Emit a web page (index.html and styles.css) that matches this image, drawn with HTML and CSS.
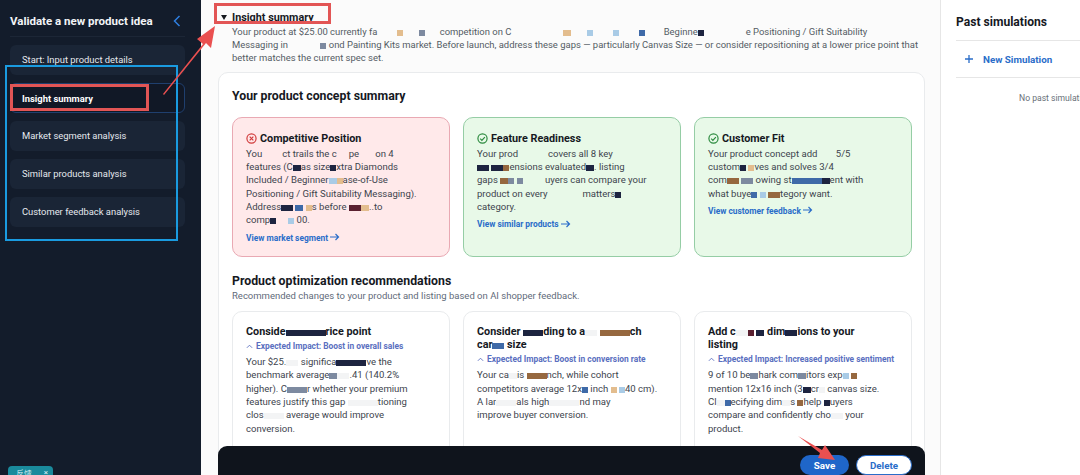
FILE: index.html
```html
<!DOCTYPE html>
<html lang="en">
<head>
    <meta charset="UTF-8">
    <meta name="viewport" content="width=device-width, initial-scale=1.0">
    <title>Validate a new product idea</title>
    <link rel="stylesheet" href="styles.css">
</head>
<body>
    <div class="shell">
        <div class="sidebar">
            <div class="side-head">
                <div class="side-title">Validate a new product idea</div>
                <svg class="side-chevron" width="8" height="12" viewBox="0 0 8 12"><path d="M6.5 1 1.5 6l5 5" fill="none" stroke="#2f7fe0" stroke-width="1.5"/></svg>
            </div>
            <div class="nav">
                <div class="nav-item">Start: Input product details</div>
                <div class="nav-item active">Insight summary</div>
                <div class="nav-item">Market segment analysis</div>
                <div class="nav-item">Similar products analysis</div>
                <div class="nav-item">Customer feedback analysis</div>
            </div>
            <div class="feedback"><span>反馈</span><span>×</span></div>
        </div>

        <div class="main">
            <div class="section-head"><span class="caret"></span>Insight summary</div>
            <p class="intro">Your product at $25.00 currently fa<i class="m w20 pale"></i><i class="m w6 tan"></i><i class="m w16 pale"></i><i class="m w6 slate"></i><i class="m w12 pale"></i> competition on C<i class="m w40 pale"></i><i class="m w12 pale"></i><i class="m w8 tan"></i><i class="m w16 pale"></i><i class="m w6 sky"></i><i class="m w20 pale"></i><i class="m w6 sky"></i><i class="m w20 pale"></i><i class="m w6 blue"></i><i class="m w16 pale"></i> Beginne<i class="m w6 navy"></i><i class="m w30 pale"></i><i class="m w12 pale"></i>e Positioning / Gift Suitability<br>Messaging in <i class="m w30 pale"></i><i class="m w6 slate"></i> ond Painting Kits market. Before launch, address these gaps — particularly Canvas Size — or consider repositioning at a lower price point that<br>better matches the current spec set.</p>

            <div class="panel">
                <h2 class="panel-title">Your product concept summary</h2>
                <div class="card-row">
                    <div class="summary bad">
                        <h3><svg width="11" height="11" viewBox="0 0 12 12"><circle cx="6" cy="6" r="5" fill="none" stroke="#d13a3a" stroke-width="1.3"/><path d="M4 4l4 4M8 4l-4 4" stroke="#d13a3a" stroke-width="1.3"/></svg>Competitive Position</h3>
                        <p>You<i class="m w20 pale"></i>ct trails the c<i class="m w12 pale"></i>pe<i class="m w16 pale"></i>on 4<br>features (C<i class="m w8 navy"></i>as size<i class="m w6 navy"></i>xtra Diamonds<br>Included / Beginner<i class="m w8 sky"></i><i class="m w6 tan"></i>ase-of-Use<br>Positioning / Gift Suitability Messaging).<br>Address<i class="m w12 navy"></i> <i class="m w8 blue"></i> <i class="m w6 tan"></i>s before <i class="m w12 maroon"></i><i class="m w8 tan"></i>..to<br>comp<i class="m w6 navy"></i><i class="m w12 pale"></i><i class="m w6 sky"></i> 00.</p>
                        <a class="more">View market segment <svg width="10" height="8" viewBox="0 0 10 8"><path d="M0 4h8.5M5.5 1l3 3-3 3" fill="none" stroke="#2a6dc9" stroke-width="1.2"/></svg></a>
                    </div>
                    <div class="summary good">
                        <h3><svg width="11" height="11" viewBox="0 0 12 12"><circle cx="6" cy="6" r="5" fill="none" stroke="#2b8a3e" stroke-width="1.3"/><path d="M3.5 6.2 5.3 8l3.3-3.6" fill="none" stroke="#2b8a3e" stroke-width="1.3"/></svg>Feature Readiness</h3>
                        <p>Your prod<i class="m w30 pale"></i>covers all 8 key<br><i class="m w12 navy"></i> <i class="m w12 navy"></i><i class="m w6 brown"></i>ensions evaluated<i class="m w8 navy"></i>. listing<br>gaps <i class="m w8 brown"></i><i class="m w6 slate"></i> <i class="m w6 slate"></i> <i class="m w20 pale"></i>uyers can compare your<br>product on every <i class="m w30 pale"></i> matters<i class="m w6 navy"></i><i class="m w8 pale"></i><br>category.</p>
                        <a class="more">View similar products <svg width="10" height="8" viewBox="0 0 10 8"><path d="M0 4h8.5M5.5 1l3 3-3 3" fill="none" stroke="#2a6dc9" stroke-width="1.2"/></svg></a>
                    </div>
                    <div class="summary good">
                        <h3><svg width="11" height="11" viewBox="0 0 12 12"><circle cx="6" cy="6" r="5" fill="none" stroke="#2b8a3e" stroke-width="1.3"/><path d="M3.5 6.2 5.3 8l3.3-3.6" fill="none" stroke="#2b8a3e" stroke-width="1.3"/></svg>Customer Fit</h3>
                        <p>Your product concept add<i class="m w16 pale"></i> 5/5<br>custom<i class="m w6 navy"></i> <i class="m w6 tan"></i>ves and solves 3/4<br>com<i class="m w12 brown"></i> <i class="m w12 slate"></i> owing st<i class="m w30 blue"></i><i class="m w8 navy"></i>ent with<br>what buye<i class="m w6 blue"></i> <i class="m w6 sky"></i> <i class="m w12 brown"></i>tegory want.</p>
                        <a class="more">View customer feedback <svg width="10" height="8" viewBox="0 0 10 8"><path d="M0 4h8.5M5.5 1l3 3-3 3" fill="none" stroke="#2a6dc9" stroke-width="1.2"/></svg></a>
                    </div>
                </div>

                <h2 class="panel-title second">Product optimization recommendations</h2>
                <div class="panel-sub">Recommended changes to your product and listing based on AI shopper feedback.</div>
                <div class="card-row">
                    <div class="rec">
                        <h3>Conside<i class="m w40 navy"></i>rice point</h3>
                        <div class="impact"><svg width="7" height="5" viewBox="0 0 8 5"><path d="M1 4l3-3 3 3" fill="none" stroke="#5a6fc0" stroke-width="1"/></svg>Expected Impact: Boost in overall sales</div>
                        <p>Your $25.<i class="m w12 pale"></i> significa<i class="m w30 navy"></i>ve the<br>benchmark average<i class="m w8 slate"></i><i class="m w12 pale"></i>.41 (140.2%<br>higher). C<i class="m w20 slate"></i>r whether your premium<br>features justify this gap <i class="m w30 pale"></i>tioning<br>clos<i class="m w20 pale"></i> average would improve<br>conversion.</p>
                    </div>
                    <div class="rec">
                        <h3>Consider <i class="m w20 navy"></i>ding to a<i class="m w12 pale"></i> <i class="m w30 brown"></i>ch<br>car<i class="m w12 blue"></i> size</h3>
                        <div class="impact"><svg width="7" height="5" viewBox="0 0 8 5"><path d="M1 4l3-3 3 3" fill="none" stroke="#5a6fc0" stroke-width="1"/></svg>Expected Impact: Boost in conversion rate</div>
                        <p>Your ca<i class="m w8 pale"></i>is <i class="m w20 brown"></i>nch, while cohort<br>competitors average 12x<i class="m w6 blue"></i> inch <i class="m w6 tan"></i> <i class="m w6 sky"></i>40 cm).<br>A lar<i class="m w20 pale"></i>als high<i class="m w30 pale"></i>nd may<br>improve buyer conversion.</p>
                    </div>
                    <div class="rec">
                        <h3>Add c<i class="m w12 pale"></i><i class="m w6 maroon"></i> <i class="m w8 navy"></i> dim<i class="m w12 navy"></i>ions to your<br>listing</h3>
                        <div class="impact"><svg width="7" height="5" viewBox="0 0 8 5"><path d="M1 4l3-3 3 3" fill="none" stroke="#5a6fc0" stroke-width="1"/></svg>Expected Impact: Increased positive sentiment</div>
                        <p>9 of 10 be<i class="m w8 slate"></i>hark com<i class="m w8 slate"></i>itors exp<i class="m w6 sky"></i> <i class="m w6 brown"></i><br>mention 12x16 inch (3<i class="m w8 navy"></i>cr<i class="m w6 pale"></i> canvas size.<br>Cl<i class="m w8 pale"></i><i class="m w6 blue"></i>ecifying dim<i class="m w8 pale"></i>s <i class="m w6 brown"></i>help <i class="m w6 navy"></i>uyers<br>compare and confidently cho<i class="m w12 pale"></i> your<br>product.</p>
                    </div>
                </div>
            </div>

            <div class="action-bar">
                <button class="btn-save">Save</button>
                <button class="btn-delete">Delete</button>
            </div>
        </div>

        <div class="right">
            <div class="right-title">Past simulations</div>
            <div class="new-sim"><svg width="10" height="10" viewBox="0 0 10 10"><path d="M5 1v8M1 5h8" stroke="#2a6dc9" stroke-width="1.3"/></svg>New Simulation</div>
            <div class="no-sims">No past simulations</div>
        </div>
    </div>

    <!-- Screenshot annotations drawn on top of the page -->
    <div class="mark blue-box"></div>
    <div class="mark red-box nav-box"></div>
    <div class="mark red-box head-box"></div>
    <svg class="arrows" width="1080" height="475" viewBox="0 0 1080 475">
        <path d="M163 94 203 44 197 39 215 26 211 48 206 43 164 95Z" fill="#ea5050"/>
        <path d="M798 436 822 450 825 445 835 460 818 458 820 453Z" fill="#ea5050"/>
    </svg>
</body>
</html>
```

FILE: styles.css
```css
* { box-sizing: border-box; }

body {
    margin: 0;
    height: 475px;
    overflow: hidden;
    font-family: Roboto, Arial, sans-serif;
    color: #16191f;
    background: #fbfbfb;
}

p, h2, h3 { margin: 0; }

.shell { display: flex; height: 475px; }

/* Sidebar */
.sidebar {
    width: 201px;
    flex: none;
    padding: 0 16px 0 10px;
    background: #131c2b;
    color: #e6e9ee;
    position: relative;
}

.side-head {
    display: flex;
    justify-content: space-between;
    align-items: center;
    height: 37px;
    padding: 6px 3px 0 0;
    border-bottom: 1px solid #1c2636;
    width: 175px;
}

.side-title { font-size: 11.5px; font-weight: 700; color: #f2f4f7; }
.side-chevron { margin-right: 1px; }

.nav { display: flex; flex-direction: column; gap: 8px; margin-top: 8px; width: 175px; }

.nav-item {
    height: 30px;
    line-height: 30px;
    padding-left: 12px;
    font-size: 9.4px;
    background: #1a2536;
    border-radius: 6px;
}

.nav-item.active {
    background: #111826;
    border: 1px solid #1f3f6e;
    padding-left: 11px;
    line-height: 29px;
    font-weight: 700;
    color: #fff;
}

.feedback {
    position: absolute;
    left: 8px;
    top: 466px;
    width: 45px;
    height: 14px;
    padding: 2px 5px 0 8px;
    display: flex;
    justify-content: space-between;
    font-size: 8px;
    color: #d8f0f4;
    background: #1a8a9c;
    border-radius: 4px;
}

/* Main column */
.main {
    flex: 1;
    min-width: 0;
    padding: 0 15px 0 17px;
    position: relative;
    overflow: hidden;
    border-right: 1px solid #e6e6e6;
}

.section-head {
    display: flex;
    align-items: center;
    margin-top: 10px;
    height: 14px;
    padding-left: 3px;
    font-size: 10.8px;
    font-weight: 700;
}

.caret {
    width: 0;
    height: 0;
    margin-right: 5px;
    border-left: 3.5px solid transparent;
    border-right: 3.5px solid transparent;
    border-top: 5px solid #16191f;
}

.intro {
    margin-top: 1px;
    padding-left: 14px;
    font-size: 9.45px;
    line-height: 13.2px;
    color: #545b64;
    white-space: nowrap;
}

.panel {
    margin-top: 7px;
    padding: 16px 13px 0;
    height: 420px;
    background: #fff;
    border: 1px solid #e9ebed;
    border-radius: 10px;
}

.panel-title { font-size: 12.3px; line-height: 15px; font-weight: 700; color: #16191f; }
.panel-title.second { margin-top: 17px; }
.panel-sub { font-size: 9.5px; line-height: 13px; color: #5f6b7a; }

.card-row { display: grid; grid-template-columns: repeat(3, 218px); gap: 13px; margin-top: 13px; }
.panel-sub + .card-row { margin-top: 9px; }

.summary {
    height: 140px;
    padding: 14px 13px 0;
    border-radius: 10px;
    border: 1px solid;
}

.summary.bad { background: #ffe9ea; border-color: #e9a9b3; }
.summary.good { background: #e8f9e8; border-color: #95cda5; }

.summary h3 { display: flex; align-items: center; gap: 3px; font-size: 10.8px; line-height: 14px; font-weight: 700; }
.summary p, .rec p { font-size: 9.55px; line-height: 13.35px; color: #3d444d; white-space: nowrap; }
.summary p { margin-top: 1px; }

.more {
    display: block;
    margin-top: 5px;
    font-size: 8.4px;
    line-height: 13px;
    font-weight: 700;
    color: #2a6dc9;
}
.more svg { vertical-align: -0.5px; }

.rec {
    height: 150px;
    padding: 13px 13px 0;
    background: #fff;
    border: 1px solid #e9ebed;
    border-radius: 10px;
}

.rec h3 { font-size: 10.8px; line-height: 13.4px; font-weight: 700; white-space: nowrap; }
.rec p { margin-top: 2px; }

.impact {
    display: flex;
    align-items: center;
    gap: 3px;
    margin-top: 2px;
    font-size: 8.4px;
    line-height: 13px;
    font-weight: 700;
    color: #5a6fc0;
    white-space: nowrap;
}
.impact svg { flex: none; }

/* Mosaic patches over the hidden words */
.m { display: inline-block; height: 6px; vertical-align: -1px; }
.w6 { width: 6px; }
.w8 { width: 8px; }
.w12 { width: 12px; }
.w16 { width: 16px; }
.w20 { width: 20px; }
.w30 { width: 30px; }
.w40 { width: 40px; }
.pale { background: #f3f4f5; }
.navy { background: #1d2440; }
.tan { background: #e3bd8e; }
.blue { background: #3f6aa8; }
.sky { background: #a9cbe6; }
.slate { background: #7d8aa0; }
.brown { background: #96683f; }
.maroon { background: #5a2030; }

.summary .pale, .intro .pale { background: transparent; }

/* Fixed action bar */
.action-bar {
    position: absolute;
    left: 17px;
    top: 446px;
    width: 707px;
    height: 34px;
    padding: 9px 13px 0 0;
    display: flex;
    justify-content: flex-end;
    gap: 7px;
    background: #0f141c;
    border-radius: 9px 9px 0 0;
}

.btn-save, .btn-delete {
    height: 20px;
    padding: 0;
    border-radius: 10px;
    font: 700 9.8px Roboto, Arial, sans-serif;
}

.btn-save { width: 49px; background: #1f66c9; color: #fff; border: none; }
.btn-delete { width: 56px; background: #fff; color: #2a6dc9; border: 1.5px solid #2a6dc9; }

/* Right rail */
.right { width: 139px; flex: none; padding-left: 15px; background: #fff; overflow: hidden; }

.right-title {
    height: 41px;
    padding-top: 15px;
    font-size: 12.1px;
    font-weight: 700;
    border-bottom: 1px solid #e6e6e6;
    margin-right: -10px;
}

.new-sim {
    display: flex;
    align-items: center;
    gap: 9px;
    height: 37px;
    padding-left: 8px;
    font-size: 9.8px;
    font-weight: 700;
    color: #2a6dc9;
    border-bottom: 1px solid #e6e6e6;
    margin-right: -10px;
}

.no-sims { margin-top: 15px; padding-left: 63px; font-size: 8.6px; color: #687078; white-space: nowrap; }

/* Annotations */
.mark { position: absolute; }
.blue-box { left: 5px; top: 65px; width: 173px; height: 176px; border: 2px solid #1a9be0; }
.red-box { border: 3px solid #e25555; }
.nav-box { left: 10px; top: 84px; width: 139px; height: 27px; }
.head-box { left: 214px; top: 3px; width: 117px; height: 21px; }
.arrows { position: absolute; left: 0; top: 0; }
```
